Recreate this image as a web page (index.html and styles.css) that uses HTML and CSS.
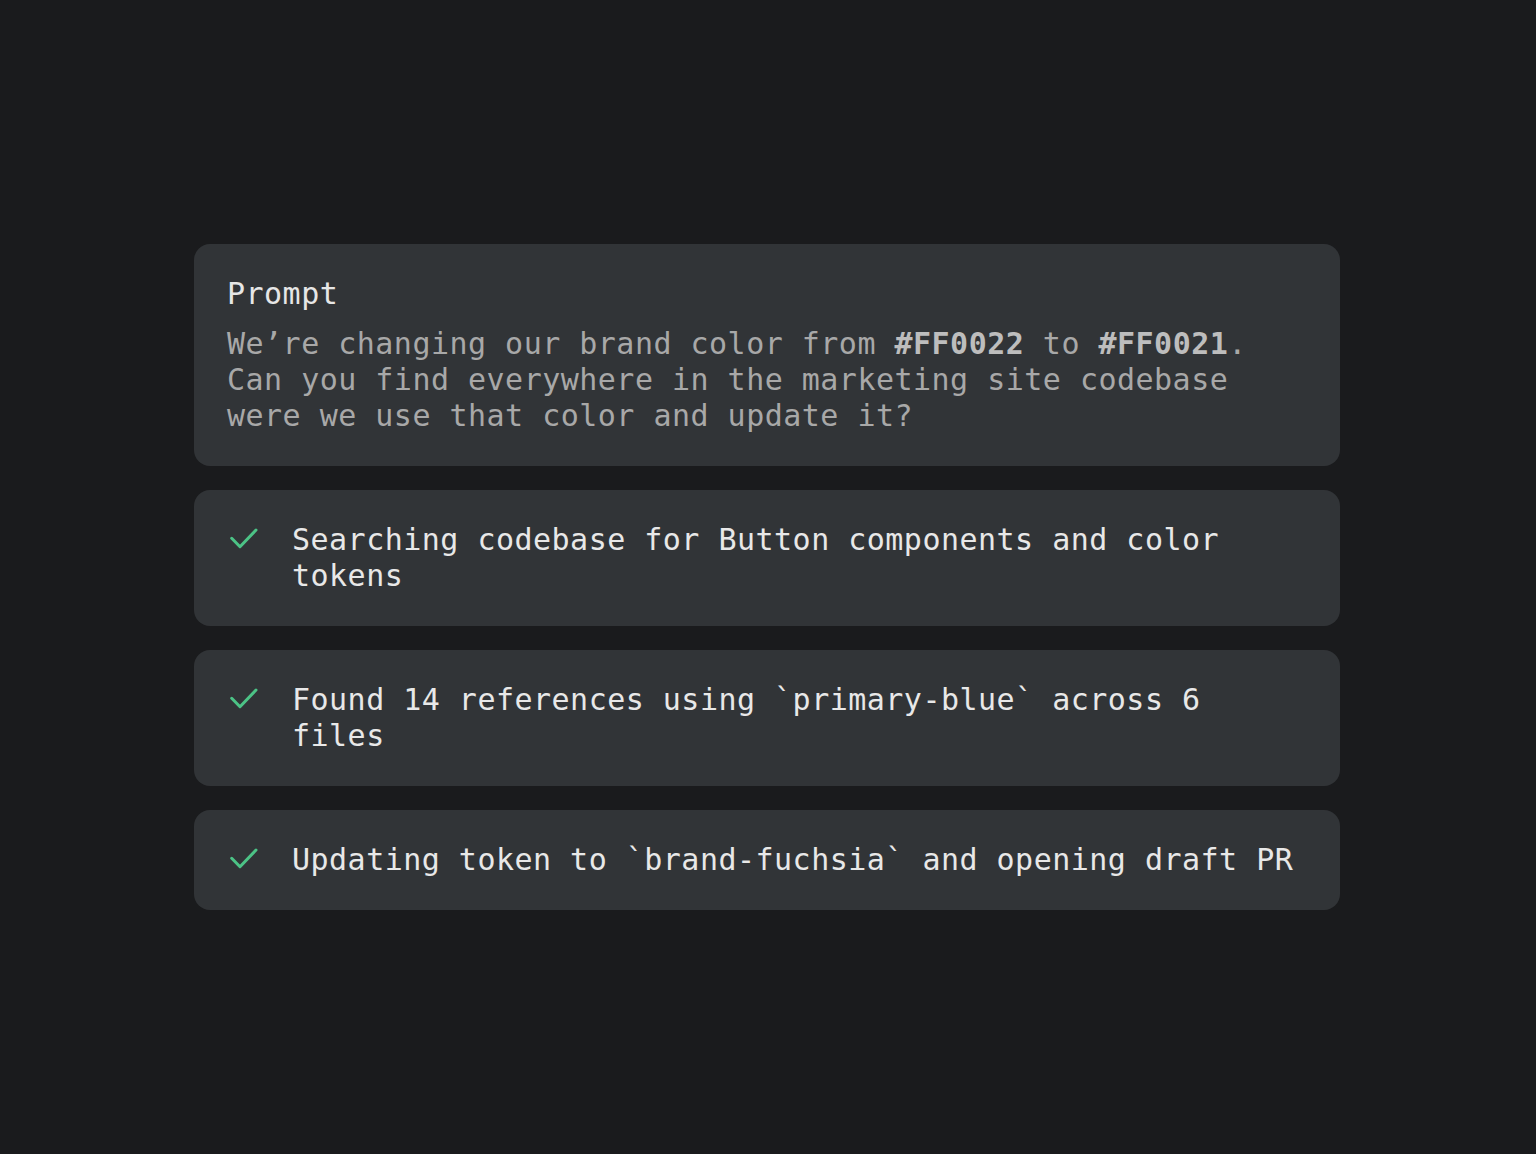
FILE: index.html
```html
<!DOCTYPE html>
<html>
<head>
<meta charset="utf-8">
<link rel="stylesheet" href="styles.css">
</head>
<body>
<main class="stack">
  <section class="card prompt">
    <div class="prompt-title">Prompt</div>
    <div class="prompt-body">We’re changing our brand color from <b>#FF0022</b> to <b>#FF0021</b>.<br>Can you find everywhere in the marketing site codebase<br>were we use that color and update it?</div>
  </section>
  <section class="card step">
    <svg class="check" width="36" height="36" viewBox="0 0 36 36"><path d="M5.7 16.3 L14 24.7 L30 8" fill="none" stroke="#4cc386" stroke-width="3" stroke-linecap="round" stroke-linejoin="round"/></svg>
    <div class="step-text">Searching codebase for Button components and color tokens</div>
  </section>
  <section class="card step">
    <svg class="check" width="36" height="36" viewBox="0 0 36 36"><path d="M5.7 16.3 L14 24.7 L30 8" fill="none" stroke="#4cc386" stroke-width="3" stroke-linecap="round" stroke-linejoin="round"/></svg>
    <div class="step-text">Found 14 references using `primary-blue` across 6 files</div>
  </section>
  <section class="card step">
    <svg class="check" width="36" height="36" viewBox="0 0 36 36"><path d="M5.7 16.3 L14 24.7 L30 8" fill="none" stroke="#4cc386" stroke-width="3" stroke-linecap="round" stroke-linejoin="round"/></svg>
    <div class="step-text">Updating token to `brand-fuchsia` and opening draft PR</div>
  </section>
</main>
</body>
</html>
```

FILE: styles.css
```css
html, body {
  margin: 0;
  padding: 0;
  background: #1a1b1d;
}
body {
  min-height: 1154px;
  font-family: "DejaVu Sans Mono", "Liberation Mono", monospace;
  font-size: 30px;
  line-height: 36px;
  letter-spacing: 0.48px;
}
.stack {
  width: 1146px;
  margin: 0 auto;
  padding-top: 244px;
  display: flex;
  flex-direction: column;
  gap: 24px;
  position: relative;
  left: -1px;
}
.card {
  background: #313437;
  border-radius: 16px;
  padding: 32px 42px 32px 33px;
}
.prompt-title {
  color: #e6e6e6;
}
.prompt-body {
  margin-top: 14px;
  color: #a8a8a8;
  white-space: nowrap;
}
.prompt-body b {
  color: #bdbdbd;
  font-weight: bold;
}
.step {
  display: flex;
  align-items: flex-start;
  gap: 30px;
}
.check {
  flex: none;
  display: block;
  margin-left: -1px;
}
.step-text {
  flex: 1;
  color: #e8e8e8;
}
```
